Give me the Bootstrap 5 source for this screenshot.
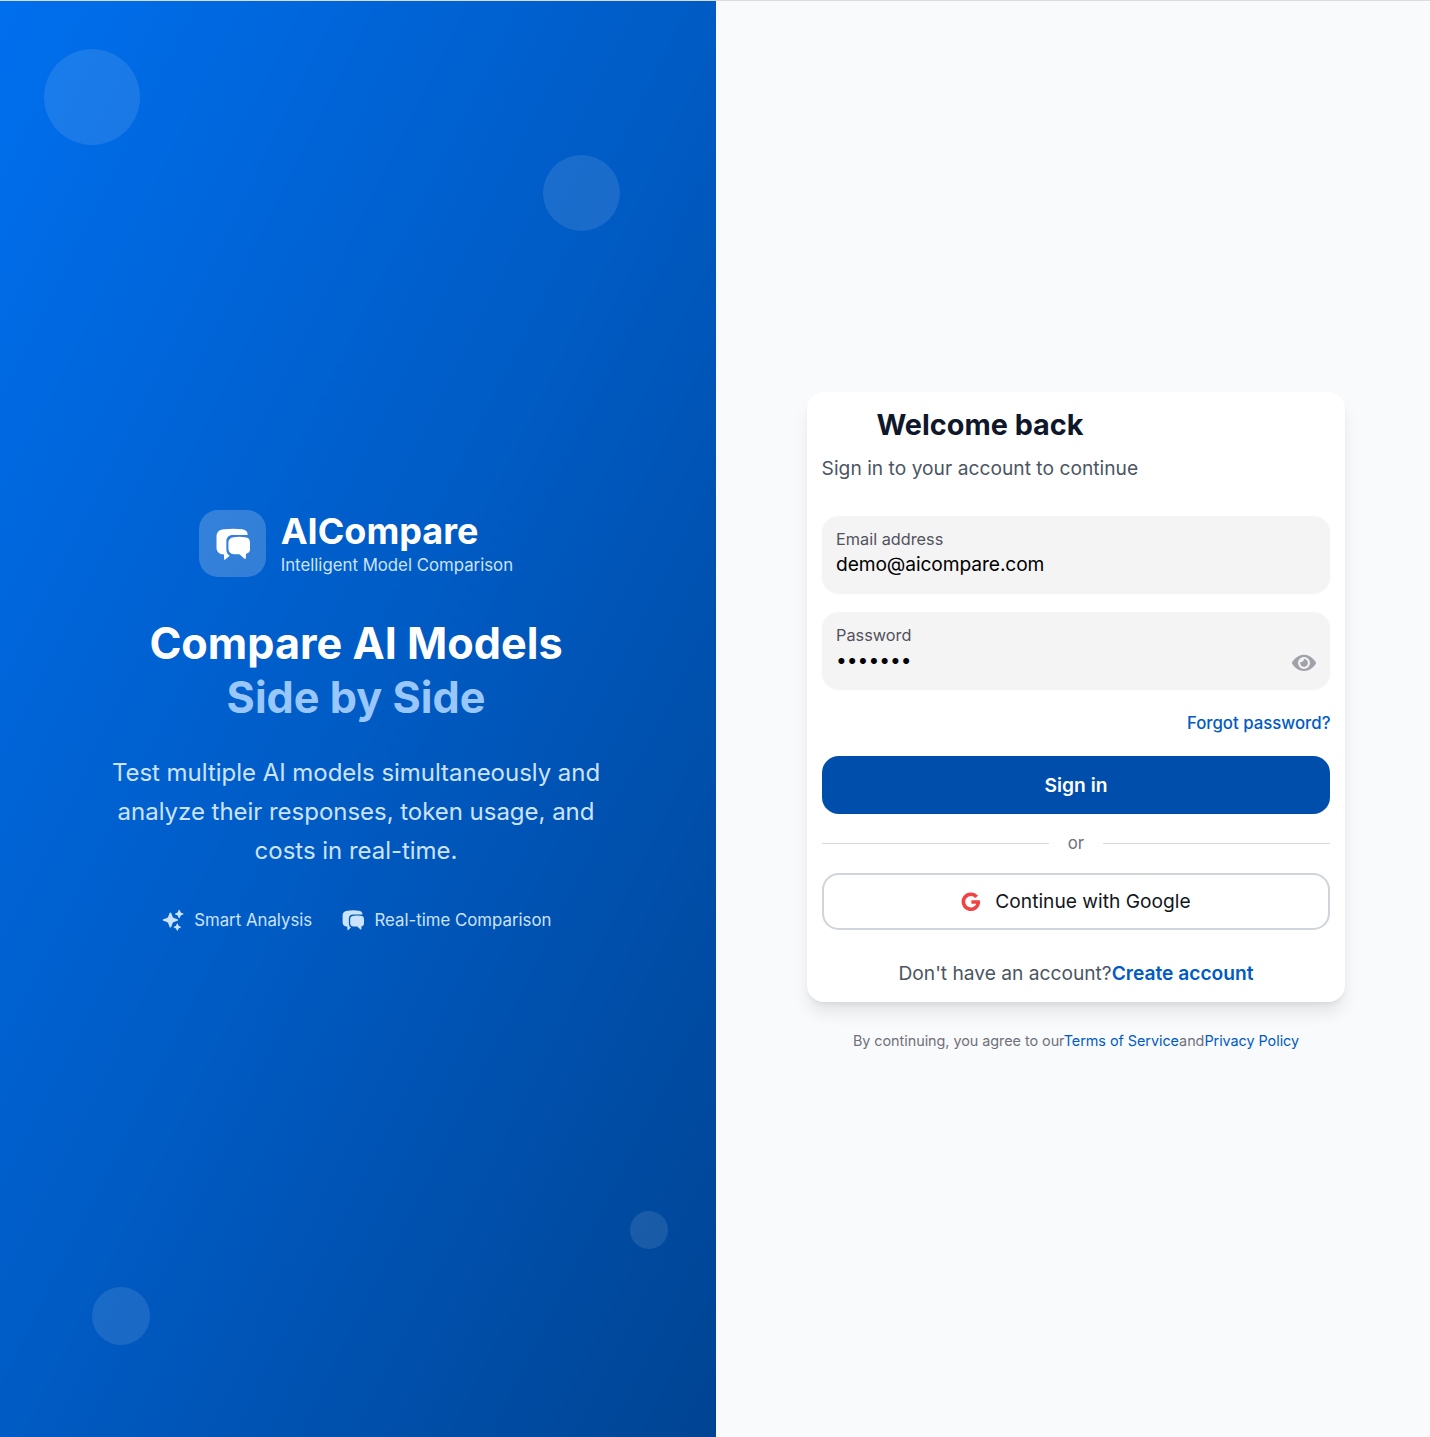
<!DOCTYPE html>
<html lang="en">
<head>
<meta charset="utf-8">
<meta name="viewport" content="width=device-width, initial-scale=1">
<title>AICompare – Sign in</title>
<link href="https://cdn.jsdelivr.net/npm/bootstrap@5.3.0/dist/css/bootstrap.min.css" rel="stylesheet">
<style>
body{font-family:Inter,"Noto Sans",sans-serif;background:#f9fafc;color:#11181c;line-height:1.5}
a{text-decoration:none;color:#005bc4}
.page{height:1437px;border-top:1px solid #d9dbdd;overflow:hidden}
.hero{width:716px;background:linear-gradient(to bottom right,#006fee 0%,#005bc4 50%,#004493 100%);color:#fff;padding:508.8px 4px 0 0}
.bubble{background:rgba(255,255,255,.1)}
.b1{left:44px;top:48px;width:96px;height:96px}
.b2{left:543px;top:154px;width:77px;height:76px}
.b3{left:630px;top:1210px;width:38px;height:38px}
.b4{left:92px;top:1286px;width:58px;height:58px}
.brand{gap:14.6px;margin-bottom:39.2px}
.logo-box{width:67.2px;height:67.2px;border-radius:19.2px;background:rgba(255,255,255,.2)}
.brand-name{font-size:36px;line-height:43.2px;font-weight:700}
.tagline{font-size:16.8px;line-height:24px;color:#cce3fd}
.headline{font-size:43.2px;line-height:54px;font-weight:700;margin-bottom:28.8px}
.headline span{color:#99c7fb}
.pitch{font-size:24px;line-height:39px;letter-spacing:-.03px;color:#cce3fd;width:537.6px;margin-bottom:37.6px}
.features{gap:28.8px;font-size:16.8px;line-height:24px;color:#cce3fd}
.features>div{gap:9.6px}
.side{width:714px;padding:391px 0 0 6px}
.login{width:538px;height:610px;border:0;border-radius:16.8px;padding:14.4px 15px;box-shadow:0 12px 18px -3.6px rgba(0,0,0,.1),0 4.8px 7.2px -4.8px rgba(0,0,0,.1)}
.login h2{font-size:28.8px;line-height:38.4px;font-weight:700;color:#0f172a;margin:0 0 9.6px 54.4px}
.sub{font-size:19.2px;line-height:28.8px;letter-spacing:.02px;color:#4b5563;margin:0 0 32.8px -.4px}
.field{height:77px;border-radius:16.8px;background:#f4f4f5;padding:10.4px 14px;margin-bottom:19px;box-shadow:0 1px 2px rgba(0,0,0,.05)}
.field label{font-size:16.3px;line-height:26px;color:#52525b}
.field input{font-size:19.2px;line-height:24px;letter-spacing:-.1px;color:#000;background:none;border:0;outline:0;padding:0}
.field input[type=password]{letter-spacing:0}
.eye{margin-bottom:3.6px}
.forgot{font-size:16.8px;line-height:24px;font-weight:500;margin:3px -.5px 21px 0}
.signin{height:58px;border-radius:16.8px;background:#004eab;color:#fff;font-size:19.2px;font-weight:600}
.or-row{gap:19.2px;height:59px;font-size:16.8px;color:#71717a}
.or-row span{position:relative;top:.5px}
.or-row hr{margin:0;border-top:1px solid #d9d9dc;opacity:1}
.google{height:57px;border-radius:16.8px;border:2px solid #d1d4db;color:#11181c;font-size:19.2px;gap:14px}
.google svg{margin-top:1px}
.signup{font-size:19.2px;line-height:28.8px;letter-spacing:-.01px;color:#4b5563;margin-top:29px}
.legal{font-size:14.4px;line-height:20px;letter-spacing:-.04px;color:#71717a;margin-top:29px}
</style>
</head>
<body>
<main class="page d-flex">
  <section class="hero position-relative flex-shrink-0 d-flex flex-column align-items-center text-center">
    <div class="bubble b1 rounded-circle position-absolute"></div>
    <div class="bubble b2 rounded-circle position-absolute"></div>
    <div class="bubble b3 rounded-circle position-absolute"></div>
    <div class="bubble b4 rounded-circle position-absolute"></div>
    <svg class="d-none">
      <symbol id="chat" viewBox="0 0 24 24"><path d="M6.3 2.7Q12.3 2 18 2.7C20.4 3 21.5 4.300 21.500 6.400H12.200C9.300 6.400 7.900 7.900 7.900 10.600V15.500C7.900 17.500 8.600 18.800 10 19.600L7.200 22.100C6.800 22.400 6.400 22.200 6.400 21.700V18.800C3.300 18.600 1.600 17 1.600 14.300V7.500C1.600 4.500 3.200 3 6.300 2.700Z"/><path d="M12.700 7.800Q16.200 7.300 19.800 7.800C22 8 23 9.200 23 11.200V15.300C23 17.100 22.100 18.200 20.400 18.400V21.100C20.400 21.600 19.900 21.800 19.500 21.500L16.200 18.600H12.700C10.400 18.500 9.200 17.300 9.200 15.200V11.200C9.200 9.200 10.400 8.100 12.700 7.800Z"/></symbol>
    </svg>
    <div class="brand d-flex align-items-center">
      <div class="logo-box d-flex align-items-center justify-content-center"><svg width="37.6" height="37.6" fill="#fff"><use href="#chat"/></svg></div>
      <div class="text-start"><div class="brand-name">AICompare</div><div class="tagline">Intelligent Model Comparison</div></div>
    </div>
    <h1 class="headline">Compare AI Models<br><span>Side by Side</span></h1>
    <p class="pitch">Test multiple AI models simultaneously and analyze their responses, token usage, and costs in real-time.</p>
    <div class="features d-flex">
      <div class="d-flex align-items-center"><svg width="24" height="24" viewBox="0 0 24 24" fill="#cce3fd"><path d="M8.600 5Q9.400 3.800 10.200 5L11.600 8.700Q12 9.600 12.900 10L16.600 11.300Q17.600 12 16.600 12.700L12.900 14Q12 14.400 11.600 15.300L10.200 19Q9.400 20.200 8.600 19L7.200 15.300Q6.800 14.400 5.900 14L2.200 12.700Q1.200 12 2.200 11.300L5.900 10Q6.800 9.600 7.200 8.700Z"/><path d="M17.700 2.100Q18.200 1.200 18.700 2.100L19.700 4.500L22.100 5.500Q23 6 22.100 6.500L19.700 7.500L18.700 9.900Q18.200 10.800 17.700 9.900L16.700 7.500L14.300 6.500Q13.400 6 14.300 5.500L16.700 4.500Z"/><path d="M15.900 15.700Q16.300 15 16.700 15.700L17.600 17.800L19.700 18.700Q20.400 19.100 19.700 19.500L17.600 20.400L16.700 22.500Q16.300 23.200 15.900 22.500L15 20.400L12.900 19.500Q12.200 19.100 12.900 18.700L15 17.800Z"/></svg><span>Smart Analysis</span></div>
      <div class="d-flex align-items-center"><svg width="24" height="24" fill="#cce3fd"><use href="#chat"/></svg><span>Real-time Comparison</span></div>
    </div>
  </section>
  <section class="side d-flex flex-column align-items-center">
    <form class="login card">
      <h2>Welcome back</h2>
      <p class="sub">Sign in to your account to continue</p>
      <div class="field d-flex flex-column"><label for="email">Email address</label><input id="email" type="email" value="demo@aicompare.com"></div>
      <div class="field d-flex align-items-end justify-content-between">
        <div class="d-flex flex-column align-self-start"><label for="pw">Password</label><input id="pw" type="password" value="demo123"></div>
        <svg class="eye" width="24" height="24" viewBox="0 0 24 24" fill="#a1a1aa"><path fill-rule="evenodd" d="M12 3.800C6 3.800 1.700 8.700.2 11.200Q-.2 12 .2 12.700C1.700 15.200 6 20 12 20S22.300 15.200 23.800 12.700Q24.200 12 23.800 11.200C22.300 8.700 18 3.800 12 3.800ZM12 6A6 6 0 1 1 12 18A6 6 0 1 1 12 6Z"/><path d="M12 8.100A3.900 3.900 0 1 1 8.300 10.900Q11.400 11.500 12 8.100Z"/></svg>
      </div>
      <a class="forgot align-self-end" href="#">Forgot password?</a>
      <button class="signin btn" type="button">Sign in</button>
      <div class="or-row d-flex align-items-center"><hr class="flex-fill"><span>or</span><hr class="flex-fill"></div>
      <button class="google btn d-flex align-items-center justify-content-center" type="button"><svg width="20" height="20" viewBox="0 0 20 20" fill="none" stroke="#f04444" stroke-width="3.600"><path d="M15.700 4.900A7.500 7.500 0 1 0 17.400 10.200M18.900 10H10.400"/></svg><span>Continue with Google</span></button>
      <div class="signup text-center">Don't have an account?<a class="fw-semibold" href="#">Create account</a></div>
    </form>
    <div class="legal">By continuing, you agree to our<a href="#">Terms of Service</a>and<a href="#">Privacy Policy</a></div>
  </section>
</main>
<script src="https://cdn.jsdelivr.net/npm/bootstrap@5.3.0/dist/js/bootstrap.bundle.min.js"></script>
</body>
</html>
